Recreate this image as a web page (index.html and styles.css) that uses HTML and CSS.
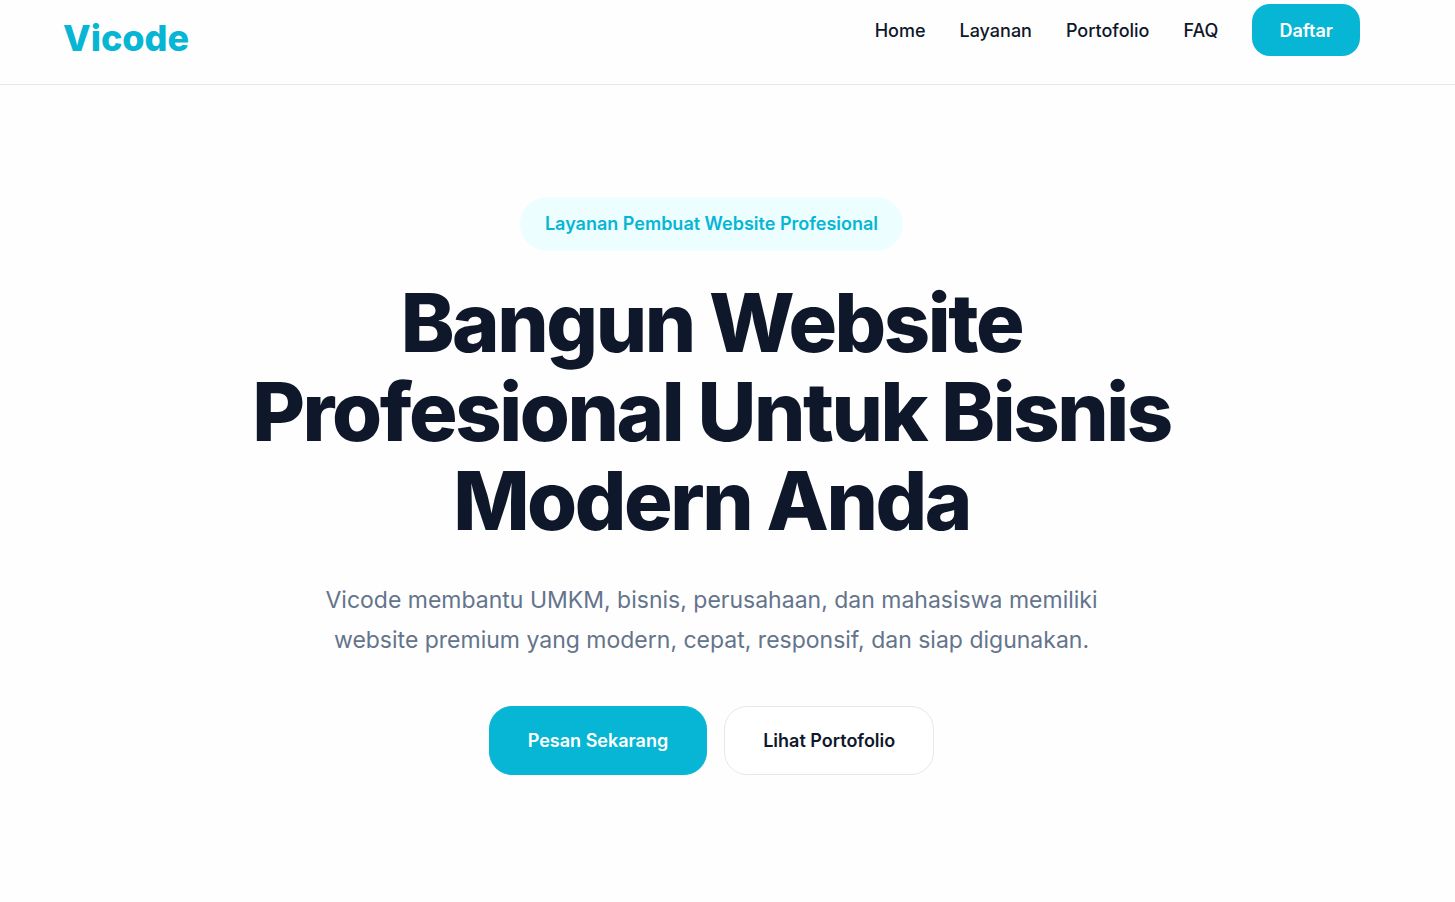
FILE: index.html
```html
<!DOCTYPE html>
<html lang="id">
<head>
<meta charset="utf-8">
<meta name="viewport" content="width=device-width, initial-scale=1">
<title>Vicode</title>
<link rel="stylesheet" href="styles.css">
</head>
<body>
<header class="navbar">
  <a class="logo" href="#">Vicode</a>
  <nav class="menu">
    <a href="#">Home</a>
    <a href="#">Layanan</a>
    <a href="#">Portofolio</a>
    <a href="#">FAQ</a>
    <a class="register" href="#">Daftar</a>
  </nav>
</header>
<main class="hero">
  <span class="badge">Layanan Pembuat Website Profesional</span>
  <h1>Bangun Website Profesional Untuk Bisnis Modern Anda</h1>
  <p>Vicode membantu UMKM, bisnis, perusahaan, dan mahasiswa memiliki website premium yang modern, cepat, responsif, dan siap digunakan.</p>
  <div class="actions">
    <a class="btn primary" href="#">Pesan Sekarang</a>
    <a class="btn secondary" href="#">Lihat Portofolio</a>
  </div>
</main>
</body>
</html>
```
FILE: styles.css
```css
* { box-sizing: border-box; margin: 0; padding: 0; }
body {
  font-family: Inter, "Liberation Sans", sans-serif;
  font-size: 18px;
  color: #0f172a;
  background: #fefefe;
}
a { color: inherit; text-decoration: none; }
.navbar {
  display: flex;
  justify-content: space-between;
  align-items: flex-start;
  padding: 4px 95px 28px 63px;
  border-bottom: 1px solid #e2e8f0;
}
.logo {
  padding-top: 16px;
  font-size: 36px;
  line-height: 36px;
  font-weight: 800;
  color: #06b6d4;
}
.menu { display: flex; align-items: center; gap: 34px; font-weight: 500; }
.register {
  padding: 16px 27px 14px;
  line-height: 22px;
  font-weight: 600;
  color: #fff;
  background: #06b6d4;
  border-radius: 18px;
}
.hero {
  display: flex;
  flex-direction: column;
  align-items: center;
  padding: 112px 32px 126px 0;
  text-align: center;
}
.badge {
  padding: 15px 25px;
  line-height: 24px;
  font-weight: 600;
  color: #06b6d4;
  background: #ecfeff;
  border-radius: 27px;
}
h1 {
  max-width: 1000px;
  margin-top: 28px;
  font-size: 81px;
  line-height: 89px;
  font-weight: 800;
  letter-spacing: -0.03em;
}
.hero p {
  max-width: 790px;
  margin-top: 34px;
  font-size: 23px;
  line-height: 40px;
  color: #64748b;
}
.actions { display: flex; gap: 17px; margin-top: 46px; }
.btn {
  padding: 22px 38px;
  line-height: 23px;
  font-weight: 600;
  border: 1px solid #e2e8f0;
  border-radius: 23px;
}
.primary { color: #fff; background: #06b6d4; border-color: #06b6d4; }
.secondary { background: #fff; }
```
